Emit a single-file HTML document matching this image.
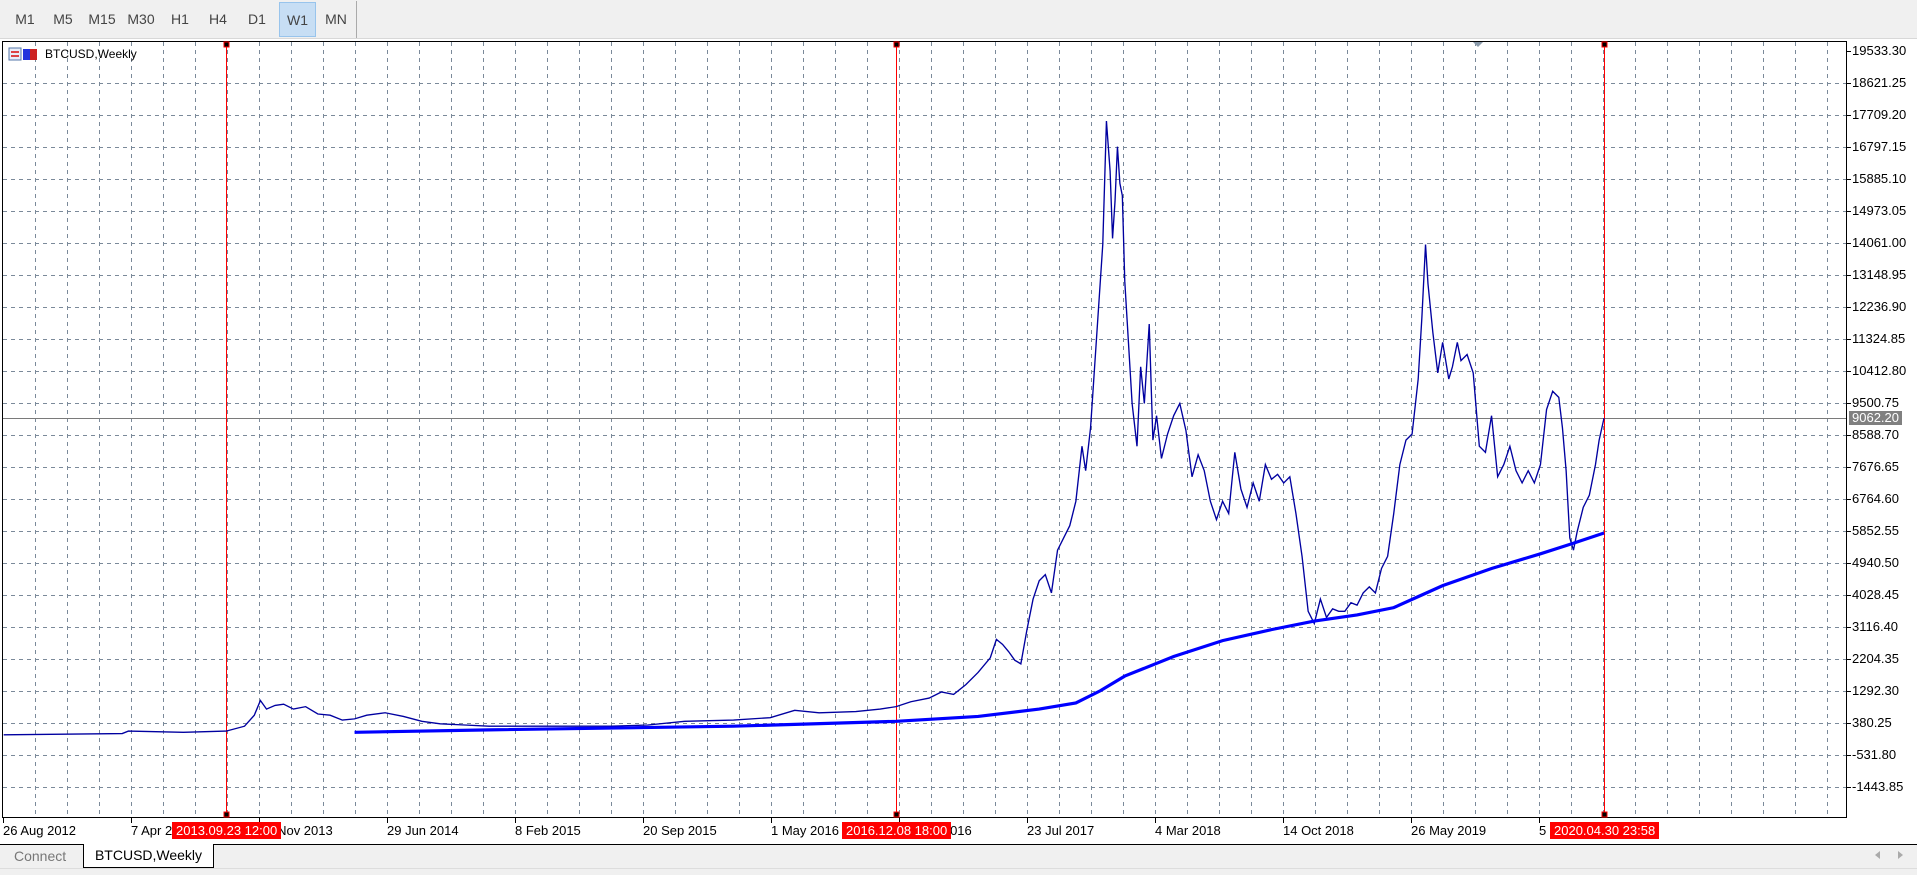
<!DOCTYPE html>
<html><head><meta charset="utf-8"><style>
*{margin:0;padding:0;box-sizing:border-box}
body{width:1917px;height:875px;background:#fff;font-family:"Liberation Sans",sans-serif;position:relative;overflow:hidden}
#tb{position:absolute;left:0;top:0;width:1917px;height:39px;background:#f0f0f0;border-bottom:1px solid #d8d8d8}
.b{position:absolute;top:2px;height:35px;line-height:35px;font-size:14px;color:#444;text-align:center;width:38px}
.sel{background:#c7def4;border:1px solid #98c4ec}
#sep{position:absolute;left:356px;top:1px;width:1px;height:37px;background:#aaa}
.pl{position:absolute;left:1852px;font-size:13px;color:#000;line-height:14px}
.dl{position:absolute;top:823px;font-size:13px;color:#000;white-space:nowrap}
.rl{position:absolute;top:822px;height:17px;background:#f00;color:#fff;font-size:13px;line-height:17px;padding:0 4px;white-space:nowrap}
#tabs{position:absolute;left:0;top:844px;width:1917px;height:24px;background:#f0f0f0;border-top:1px solid #000}
#bot{position:absolute;left:0;top:868px;width:1917px;height:7px;background:#f0f0f0;border-top:1px solid #ddd}
</style></head><body>
<div id="tb">
<div class="b" style="left:6px">M1</div>
<div class="b" style="left:44px">M5</div>
<div class="b" style="left:83px">M15</div>
<div class="b" style="left:122px">M30</div>
<div class="b" style="left:161px">H1</div>
<div class="b" style="left:199px">H4</div>
<div class="b" style="left:238px">D1</div>
<div class="b sel" style="left:279px;width:37px">W1</div>
<div class="b" style="left:317px">MN</div>
<div id="sep"></div>
</div>
<svg style="position:absolute;left:0;top:0" width="1917" height="875">
<g id="grid"></g>
<rect x="2.5" y="41.5" width="1844" height="776" fill="none" stroke="#000"/>
<line x1="3" y1="418.5" x2="1846" y2="418.5" stroke="#7a7a7a"/>
<line x1="226.5" y1="42" x2="226.5" y2="817" stroke="#f00"/>
<line x1="896.5" y1="42" x2="896.5" y2="817" stroke="#f00"/>
<line x1="1604.5" y1="42" x2="1604.5" y2="817" stroke="#f00"/>
<rect x="224" y="42" width="5" height="5" fill="#000" stroke="#f00"/><rect x="894" y="42" width="5" height="5" fill="#000" stroke="#f00"/><rect x="1602" y="42" width="5" height="5" fill="#000" stroke="#f00"/>
<rect x="224" y="812" width="5" height="5" fill="#000" stroke="#f00"/><rect x="894" y="812" width="5" height="5" fill="#000" stroke="#f00"/><rect x="1602" y="812" width="5" height="5" fill="#000" stroke="#f00"/>
<path d="M1473 42 l5 5 l5 -5z" fill="#8a9aaa"/>
<g transform="scale(1.22258)">
<polyline fill="none" stroke="#0000a0" stroke-width="1.1" points="3,601 100,600 105,598 150,599 185,598 200,594 208,585 213,573 218,580 225,577 232,576 240,580 250,578 260,584 270,585 280,589 290,588 300,585 315,583 330,586 345,590 360,592 380,593 400,594 430,594 470,594 500,594 530,593 560,590 600,589 630,587 650,581 670,583 700,582 720,580 733,578 745,574 760,571 770,566 780,568 790,560 800,550 810,538 815,523 820,527 825,533 830,540 835,543 840,515 845,490 850,475 855,470 860,485 865,450 870,440 875,430 880,410 885,365 888,385 892,350 895,305 898,260 902,200 905,99 908,140 910,195 912,165 914,120 916,150 918,160 920,230 923,280 926,330 930,365 933,300 936,330 940,265 943,360 946,340 950,375 955,355 960,340 965,330 970,352 975,390 980,372 985,385 990,410 995,425 1000,410 1005,420 1010,370 1015,400 1020,415 1025,395 1030,410 1035,380 1040,392 1045,388 1050,395 1055,390 1060,420 1065,455 1070,500 1075,510 1080,490 1085,505 1090,498 1095,500 1100,500 1105,493 1110,495 1115,485 1120,480 1125,485 1130,465 1135,455 1140,420 1145,380 1150,360 1155,355 1160,310 1163,260 1166,200 1168,232 1172,272 1176,305 1180,280 1185,310 1188,300 1192,280 1195,295 1200,290 1205,305 1210,365 1215,370 1220,340 1225,390 1230,380 1235,365 1240,385 1245,395 1250,385 1255,395 1260,380 1265,335 1270,320 1275,325 1278,350 1281,385 1284,440 1287,450 1290,435 1295,415 1300,405 1305,380 1308,360 1312,342"/>
<polyline fill="none" stroke="#0000ff" stroke-width="2.6" points="290,599 400,597 600,594 733,590 800,586 850,580 880,575 900,565 920,553 960,537 1000,524 1040,515 1075,508 1110,503 1140,497 1160,488 1180,479 1220,465 1260,453 1285,445 1312,436"/>
</g>
<rect x="9" y="48" width="12" height="12" fill="#e9eef8" stroke="#5577aa"/><rect x="11" y="51" width="8" height="2" fill="#d44"/><rect x="11" y="55" width="8" height="2" fill="#d44"/>
<rect x="23" y="49" width="7" height="11" fill="#2233dd"/><rect x="30" y="49" width="7" height="11" fill="#cc2222"/>
<text x="45" y="58" font-size="12" font-family="Liberation Sans">BTCUSD,Weekly</text>
<g stroke="#000" id="ticks"></g>
</svg>
<div id="labels"></div>
<div class="pl" style="top:411px;left:1849px;background:#808080;color:#fff;padding:0 3px">9062.20</div>
<div class="rl" style="left:172px">2013.09.23 12:00</div>
<div class="rl" style="left:842px">2016.12.08 18:00</div>
<div class="rl" style="left:1550px">2020.04.30 23:58</div>
<div id="tabs">
<div style="position:absolute;left:14px;top:3px;font-size:14px;color:#777">Connect</div>
<div style="position:absolute;left:83px;top:-1px;width:131px;height:24px;background:#fff;border:1px solid #000;border-top:none;font-size:14px;line-height:22px;text-align:center">BTCUSD,Weekly</div>
<div style="position:absolute;left:1871px;top:6px;width:0;height:0;border:4px solid transparent;border-right:5px solid #aaa"></div>
<div style="position:absolute;left:1898px;top:6px;width:0;height:0;border:4px solid transparent;border-left:5px solid #aaa"></div>
</div>
<div id="bot"></div>
<script>
var g=document.getElementById('grid'),t=document.getElementById('ticks'),L=document.getElementById('labels'),h='';
for(var x=35;x<1846;x+=32){for(var y=42;y<817;y+=8)h+='<line x1="'+(x+.5)+'" y1="'+y+'" x2="'+(x+.5)+'" y2="'+(y+4)+'" stroke="#7b8a9a"/>';}
var th='',lh='';
for(var i=0;i<24;i++){var y=51+i*32;if(i>0)for(var x=3;x<1846;x+=8)h+='<line x1="'+x+'" y1="'+(y+.5)+'" x2="'+(x+4)+'" y2="'+(y+.5)+'" stroke="#7b8a9a"/>';
th+='<line x1="1846" y1="'+(y+.5)+'" x2="1851" y2="'+(y+.5)+'"/>';
var v=(19533.30-i*912.05).toFixed(2);lh+='<div class="pl" style="top:'+(y-7)+'px">'+v+'</div>';}
g.innerHTML=h;
var d=['26 Aug 2012','7 Apr 2013','17 Nov 2013','29 Jun 2014','8 Feb 2015','20 Sep 2015','1 May 2016','11 Dec 2016','23 Jul 2017','4 Mar 2018','14 Oct 2018','26 May 2019','5 Jan 2020'];
for(var k=0;k<13;k++){var x=3+128*k;th+='<line x1="'+(x+.5)+'" y1="818" x2="'+(x+.5)+'" y2="823"/>';lh+='<div class="dl" style="left:'+(x)+'px">'+d[k]+'</div>';}
t.innerHTML=th;L.innerHTML=lh;
</script>
</body></html>
